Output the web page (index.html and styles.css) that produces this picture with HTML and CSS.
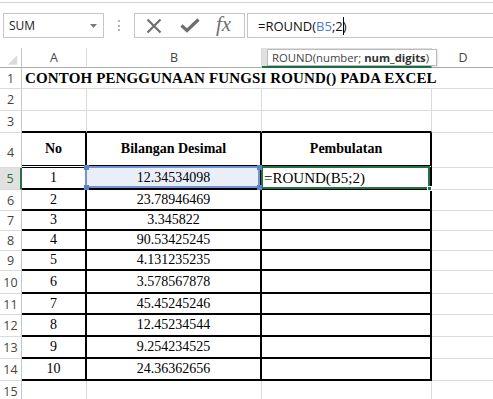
FILE: index.html
```html
<!doctype html>
<html lang="id">
  <head>
    <meta charset="UTF-8" />
    <meta name="viewport" content="width=device-width, initial-scale=1.0" />
    <title>Fungsi ROUND</title>
    <link rel="stylesheet" href="styles.css">
  </head>
  <body>
    <div class="toolbar">
      <div class="namebox">
        <span>SUM</span>
        <svg width="7" height="4" viewBox="0 0 7 4"><polygon points="0,0 7,0 3.5,4" fill="#7a7a7a" /></svg>
      </div>
      <div class="grip"><i></i><i></i><i></i></div>
      <div class="fxbox">
        <svg class="ico-x" width="16" height="16" viewBox="0 0 16 16">
          <path d="M1.5 1.5 L14.5 14.5 M14.5 1.5 L1.5 14.5" stroke="#6e6e6e" stroke-width="2.2" fill="none" />
        </svg>
        <svg class="ico-ok" width="20" height="15" viewBox="0 0 20 15">
          <path d="M1.5 7.5 L7 12.5 L18.5 1.5" stroke="#6e6e6e" stroke-width="3.2" fill="none" />
        </svg>
        <span class="fx">fx</span>
      </div>
      <div class="formula">
        <span>=ROUND(<b class="refcol">B5</b>;2</span><span class="caret"></span><span>)</span>
      </div>
    </div>

    <div class="sheet">
      <!-- kepala kolom -->
      <div class="ch corner">
        <svg width="22" height="20" viewBox="0 0 22 20"><polygon points="18,7 18,17 8,17" fill="#dcdcdc" /></svg>
      </div>
      <div class="ch">A</div>
      <div class="ch">B</div>
      <div class="ch cur">
        <!-- huruf C tertutup tooltip -->
        <div class="tip">ROUND(number;&nbsp;<b>num_digits</b>)</div>
      </div>
      <div class="ch">D</div>

      <!-- baris 1 -->
      <div class="rh">1</div>
      <div class="cell title">CONTOH PENGGUNAAN FUNGSI ROUND() PADA EXCEL</div>

      <!-- baris 2 -->
      <div class="rh">2</div>
      <div class="cell"></div><div class="cell"></div><div class="cell"></div><div class="cell"></div>

      <!-- baris 3 -->
      <div class="rh">3</div>
      <div class="cell edge"></div><div class="cell edge"></div><div class="cell edge"></div><div class="cell"></div>

      <!-- baris 4 -->
      <div class="rh low">4</div>
      <div class="cell t head">No</div>
      <div class="cell t head">Bilangan Desimal</div>
      <div class="cell t head">Pembulatan</div>
      <div class="cell"></div>

      <!-- baris 5 -->
      <div class="rh cur">5</div>
      <div class="cell t">1</div>
      <div class="cell t ref">
        12.34534098
        <div class="refbox">
          <i class="h tl"></i><i class="h tr"></i><i class="h bl"></i><i class="h br"></i>
        </div>
      </div>
      <div class="cell t active">
        =ROUND(B5;2)
        <div class="actbox"><i class="fill"></i></div>
      </div>
      <div class="cell"></div>

      <div class="rh">6</div>
      <div class="cell t">2</div><div class="cell t">23.78946469</div><div class="cell t"></div><div class="cell"></div>

      <div class="rh">7</div>
      <div class="cell t">3</div><div class="cell t">3.345822</div><div class="cell t"></div><div class="cell"></div>

      <div class="rh">8</div>
      <div class="cell t">4</div><div class="cell t">90.53425245</div><div class="cell t"></div><div class="cell"></div>

      <div class="rh">9</div>
      <div class="cell t">5</div><div class="cell t">4.131235235</div><div class="cell t"></div><div class="cell"></div>

      <div class="rh">10</div>
      <div class="cell t">6</div><div class="cell t">3.578567878</div><div class="cell t"></div><div class="cell"></div>

      <div class="rh">11</div>
      <div class="cell t">7</div><div class="cell t">45.45245246</div><div class="cell t"></div><div class="cell"></div>

      <div class="rh">12</div>
      <div class="cell t">8</div><div class="cell t">12.45234544</div><div class="cell t"></div><div class="cell"></div>

      <div class="rh">13</div>
      <div class="cell t">9</div><div class="cell t">9.254234525</div><div class="cell t"></div><div class="cell"></div>

      <div class="rh">14</div>
      <div class="cell t">10</div><div class="cell t">24.36362656</div><div class="cell t"></div><div class="cell"></div>

      <div class="rh">15</div>
      <div class="cell"></div><div class="cell"></div><div class="cell"></div><div class="cell"></div>
    </div>
  </body>
</html>
```

FILE: styles.css
```css
html,
body {
  margin: 0;
  overflow: hidden;
  background-color: #ffffff;
}
body {
  width: 493px;
  height: 399px;
  font-family: "Open Sans", sans-serif;
  color: #222;
}

/* bilah rumus */
.toolbar {
  display: flex;
  height: 35px;
  margin-top: 2px;
  padding: 10px 0 0 3px;
  border-top: 1px solid #d6d6d6;
}
.namebox {
  width: 101px;
  height: 25px;
  box-sizing: border-box;
  border: 1px solid #c6c6c6;
  display: flex;
  align-items: center;
  justify-content: space-between;
  padding: 0 6px 0 5px;
  font-size: 12px;
  color: #222;
}
.grip {
  width: 30px;
  display: flex;
  flex-direction: column;
  align-items: center;
  gap: 2.5px;
  padding-top: 7px;
}
.grip i {
  width: 2px;
  height: 2px;
  background-color: #b4b4b4;
}
.fxbox {
  width: 111px;
  height: 25px;
  box-sizing: border-box;
  border: 1px solid #c6c6c6;
  display: flex;
  align-items: center;
}
.ico-x {
  margin-left: 11px;
}
.ico-ok {
  margin-left: 18px;
}
.fx {
  margin-left: 16px;
  font-family: "Liberation Serif", serif;
  font-style: italic;
  font-size: 21px;
  color: #707070;
  line-height: 1;
  margin-top: -2px;
}
.formula {
  flex: 1;
  height: 25px;
  box-sizing: border-box;
  border: 1px solid #c6c6c6;
  margin-left: 2px;
  margin-right: -10px;
  padding-left: 10px;
  display: flex;
  align-items: center;
  font-size: 13px;
  color: #111;
}
.refcol {
  font-weight: normal;
  color: #4f7bc8;
}
.caret {
  width: 1px;
  height: 18px;
  background-color: #000;
  margin-right: -1px;
}

/* lembar kerja */
.sheet {
  display: grid;
  grid-template-columns: 22px 65px 175px 170px 63px;
  grid-template-rows: 20px 21px 22px 22px 35px 22px 21px 20px 20px 20px 23px 21px 22px 22px 22px 22px;
}
.ch,
.rh,
.cell {
  box-sizing: border-box;
  display: flex;
  align-items: center;
  justify-content: center;
  position: relative;
}
.ch {
  font-size: 12.5px;
  color: #444;
  border-right: 1px solid #dadada;
  border-bottom: 1px solid #ababab;
}
.ch.corner {
  border-right-color: #c6c6c6;
}
.ch.cur {
  background-color: #e1e1e1;
  color: #217346;
  border-bottom: 2px solid #217346;
}
.rh {
  font-size: 12.5px;
  color: #444;
  border-right: 1px solid #c6c6c6;
  border-bottom: 1px solid #dadada;
}
.rh.low {
  align-items: flex-end;
  padding-bottom: 6px;
}
.rh.cur {
  background-color: #e1e1e1;
  color: #217346;
  border-right: 2px solid #217346;
}
.cell {
  font-family: "Liberation Serif", serif;
  font-size: 14px;
  color: #000;
  border-right: 1px solid #dadada;
  border-bottom: 1px solid #dadada;
}
.title {
  grid-column: 2 / 6;
  justify-content: flex-start;
  padding-left: 3px;
  font-weight: bold;
  font-size: 15px;
  letter-spacing: 0.14px;
  white-space: nowrap;
  border-right: none;
}
.edge {
  border-bottom: 2px solid #000;
}
.t {
  border-right: 2px solid #000;
  border-bottom: 2px solid #000;
}
.head {
  font-weight: bold;
  border-bottom: 3px double #000;
}

/* sel yang dirujuk dan sel aktif */
.ref {
  background-color: #e9eef8;
}
.refbox {
  position: absolute;
  left: -2px;
  top: -2px;
  right: 0;
  bottom: 0;
  border: 2px solid #7393d2;
  z-index: 3;
}
.h {
  position: absolute;
  width: 5px;
  height: 5px;
  background-color: #5b82cc;
}
.h.tl {
  left: -3.5px;
  top: -3.5px;
}
.h.tr {
  right: -3.5px;
  top: -3.5px;
}
.h.bl {
  left: -3.5px;
  bottom: -3.5px;
}
.h.br {
  right: -3.5px;
  bottom: -3.5px;
}
.active {
  justify-content: flex-start;
  padding-left: 2px;
  font-size: 15px;
}
.actbox {
  position: absolute;
  left: -1px;
  top: -2px;
  right: 0;
  bottom: -1px;
  border: 2px solid #217346;
  z-index: 2;
}
.fill {
  position: absolute;
  right: -4px;
  bottom: -4px;
  width: 5px;
  height: 5px;
  background-color: #217346;
  border: 1px solid #fff;
  box-sizing: border-box;
}

/* tooltip argumen */
.tip {
  position: absolute;
  left: 5px;
  top: 1px;
  height: 17px;
  box-sizing: border-box;
  border: 1px solid #bcbcbc;
  background-color: #fff;
  padding: 0 7px 0 4px;
  display: flex;
  align-items: center;
  font-size: 11.3px;
  color: #444;
  white-space: nowrap;
  box-shadow: 1px 1px 2px rgba(0, 0, 0, 0.12);
  z-index: 5;
}
.tip b {
  color: #333;
}
```
